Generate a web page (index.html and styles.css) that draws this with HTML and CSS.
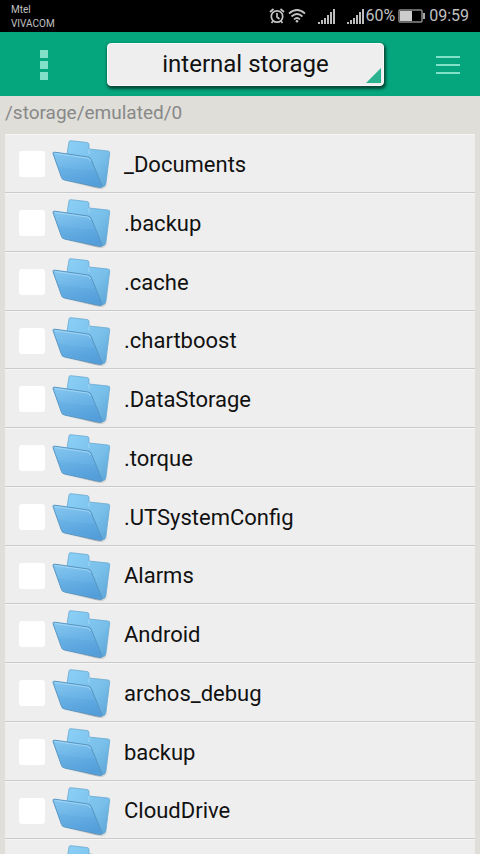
FILE: index.html
```html
<!DOCTYPE html>
<html lang="en">
<head>
<meta charset="utf-8">
<meta name="viewport" content="width=device-width, initial-scale=1">
<title>internal storage</title>
<link rel="stylesheet" href="styles.css">
</head>
<body>
<svg class="defs" aria-hidden="true">
  <defs>
    <linearGradient id="back" x1="0" y1="0" x2="1" y2="1">
      <stop offset="0" stop-color="#8cd0f6"/><stop offset="0.6" stop-color="#78bfea"/><stop offset="1" stop-color="#5ba3d6"/>
    </linearGradient>
    <linearGradient id="front" x1="0.3" y1="0" x2="0.6" y2="1">
      <stop offset="0" stop-color="#82c4ee"/><stop offset="0.5" stop-color="#69b2e6"/><stop offset="1" stop-color="#559fdb"/>
    </linearGradient>
    <linearGradient id="shade" x1="0" y1="0" x2="1" y2="0">
      <stop offset="0" stop-color="#999" stop-opacity="0"/><stop offset="0.7" stop-color="#777" stop-opacity="0.5"/><stop offset="1" stop-color="#999" stop-opacity="0"/>
    </linearGradient>
    <symbol id="folder" viewBox="0 0 60 54">
      <path d="M12 44 48 52Q54 53 57 47L48 43Z" fill="url(#shade)"/>
      <path d="M15 17 17 5Q17 3.500 19 3.700L35 5.500Q37 5.800 37 7.500V12L56 14Q58 14.300 57.700 16L54 46Q53.500 50 50 50L15 32Z" fill="url(#back)" stroke="#6aa9d0" stroke-width="0.800"/>
      <path d="M37 12V17" stroke="#a8daf6" stroke-width="0.800" fill="none"/>
      <path d="M1 16.500Q0.500 15 3 15.200L36 20Q38.500 20.500 39.200 22.500L50 48.500Q50.500 51 47.500 50.400L12.500 43Q10 42.500 9.500 40.500Z" fill="url(#front)" stroke="#5796c3" stroke-width="1"/>
      <path d="M3 16.500 36 21.200Q37.500 21.500 38.500 24" stroke="#a9d9f6" stroke-width="0.800" fill="none"/>
      <path d="M6 29Q25 34 43 33L49 48.500 13 41.500Q11 41 10.500 39Z" fill="#3e8bd0" opacity="0.1"/>
    </symbol>
  </defs>
</svg>

<div class="status">
  <div class="carriers"><span>Mtel</span><span>VIVACOM</span></div>
  <div class="indicators">
    <svg class="alarm" viewBox="0 0 16 16" fill="none" stroke="#c4c4c4" stroke-width="1.700"><circle cx="8" cy="8.500" r="5.700"/><path d="M8 5v4l2.500 2M1 4 4.500 1M15 4 11.500 1M4 13 2.500 15M12 13l1.500 2"/></svg>
    <svg class="wifi" viewBox="0 0 18 16" fill="none" stroke="#c4c4c4" stroke-width="1.700"><path d="M1 5.500Q9-1.500 17 5.500M3.500 8.500Q9 3.500 14.500 8.500M6 11.500Q9 8.500 12 11.500"/><circle cx="9" cy="13.300" r="1.300" fill="#c4c4c4" stroke="none"/></svg>
    <svg class="signal signal-one" viewBox="0 0 17 15" fill="#bdbdbd"><path d="M0 13h2v2H0zM3 11h2v4H3zM6 9h2v6H6zM9 6h2v9H9zM12 3h2v12h-2zM15 0h2v15h-2z"/></svg>
    <svg class="signal signal-two" viewBox="0 0 17 15" fill="#bdbdbd"><path d="M0 13h2v2H0zM3 11h2v4H3zM6 9h2v6H6zM9 6h2v9H9zM12 3h2v12h-2zM15 0h2v15h-2z"/></svg>
    <span class="percent">60%</span>
    <svg class="battery" viewBox="0 0 28 14"><rect x="1" y="1" width="23" height="12" rx="1" fill="none" stroke="#8a8a8a" stroke-width="1.500"/><path d="M2 2h12v10H2z" fill="#ccc"/><path d="M25 4h2v6h-2z" fill="#aaa"/></svg>
    <span class="clock">09:59</span>
  </div>
</div>

<header class="toolbar">
  <button class="tool more" type="button" aria-label="More"><svg viewBox="0 0 8 30" fill="#80e0c8"><path d="M0 0h8v8H0zM0 11h8v8H0zM0 22h8v8H0z"/></svg></button>
  <div class="picker">
    <select aria-label="Storage"><option>internal storage</option></select>
    <svg class="corner" viewBox="0 0 15 15" aria-hidden="true"><path d="M15 0v15H0z" fill="#2bb28e"/></svg>
  </div>
  <button class="tool menu" type="button" aria-label="Menu"><svg viewBox="0 0 24 20" fill="#80e0c8"><path d="M0 1h24v2H0zM0 9h24v2H0zM0 17h24v2H0z"/></svg></button>
</header>

<div class="path">/storage/emulated/0</div>

<ul class="files">
  <li><label><input type="checkbox"><svg class="folder"><use href="#folder"/></svg><span>_Documents</span></label></li>
  <li><label><input type="checkbox"><svg class="folder"><use href="#folder"/></svg><span>.backup</span></label></li>
  <li><label><input type="checkbox"><svg class="folder"><use href="#folder"/></svg><span>.cache</span></label></li>
  <li><label><input type="checkbox"><svg class="folder"><use href="#folder"/></svg><span>.chartboost</span></label></li>
  <li><label><input type="checkbox"><svg class="folder"><use href="#folder"/></svg><span>.DataStorage</span></label></li>
  <li><label><input type="checkbox"><svg class="folder"><use href="#folder"/></svg><span>.torque</span></label></li>
  <li><label><input type="checkbox"><svg class="folder"><use href="#folder"/></svg><span>.UTSystemConfig</span></label></li>
  <li><label><input type="checkbox"><svg class="folder"><use href="#folder"/></svg><span>Alarms</span></label></li>
  <li><label><input type="checkbox"><svg class="folder"><use href="#folder"/></svg><span>Android</span></label></li>
  <li><label><input type="checkbox"><svg class="folder"><use href="#folder"/></svg><span>archos_debug</span></label></li>
  <li><label><input type="checkbox"><svg class="folder"><use href="#folder"/></svg><span>backup</span></label></li>
  <li><label><input type="checkbox"><svg class="folder"><use href="#folder"/></svg><span>CloudDrive</span></label></li>
  <li><label><input type="checkbox" aria-label="Folder"><svg class="folder"><use href="#folder"/></svg></label></li>
</ul>
</body>
</html>
```
FILE: styles.css
```css
* { box-sizing: border-box; }

body {
  margin: 0;
  height: 100vh;
  display: flex;
  flex-direction: column;
  overflow: hidden;
  background: #dfded9;
  color: #111;
  font-family: Roboto, "Liberation Sans", sans-serif;
}

.defs { position: absolute; width: 0; height: 0; }

.status {
  flex: none;
  height: 32px;
  display: flex;
  justify-content: space-between;
  align-items: center;
  padding: 0 11px;
  background: #000;
  color: #c0c0c0;
}

.carriers {
  display: flex;
  flex-direction: column;
  padding-top: 2px;
  font-size: 10px;
  line-height: 14px;
}

.indicators { display: flex; align-items: center; font-size: 16px; line-height: 32px; }
.alarm { width: 16px; height: 16px; }
.wifi { width: 18px; height: 16px; margin-left: 3px; }
.signal { width: 17px; height: 15px; }
.signal-one { margin-left: 12px; }
.signal-two { margin-left: 12px; margin-right: 1px; }
.battery { width: 28px; height: 14px; margin: 0 3px; }

.toolbar {
  flex: none;
  height: 64px;
  display: flex;
  align-items: center;
  justify-content: space-between;
  background: #05a57d;
}

.tool {
  width: 64px;
  height: 64px;
  display: flex;
  align-items: center;
  justify-content: center;
  padding: 2px 0 0;
  border: 0;
  background: none;
}
.more { width: 88px; }
.more svg { width: 8px; height: 30px; }
.menu svg { width: 24px; height: 20px; }

.picker { position: relative; flex: 1; margin: 0 32px 0 19px; }

.picker select {
  display: block;
  width: 100%;
  height: 43px;
  appearance: none;
  border: 1px solid #fafafa;
  border-radius: 4px;
  background: #eee;
  box-shadow: 1px 2px 3px 1px #064836;
  color: #111;
  font-family: inherit;
  font-size: 24px;
  text-align: center;
  text-align-last: center;
}

.corner {
  position: absolute;
  right: 3px;
  bottom: 3px;
  width: 15px;
  height: 15px;
  pointer-events: none;
}

.path {
  flex: none;
  height: 38px;
  padding: 5px 5px 0;
  color: #888;
  font-size: 19px;
  line-height: 24px;
}

.files {
  flex: 1;
  min-height: 0;
  margin: 0 5px;
  padding: 0;
  overflow: hidden auto;
  scrollbar-width: none;
  list-style: none;
  background: #eee;
}

.files li { height: 59px; border-bottom: 1px solid #cacaca; border-top: 1px solid #f6f6f6; }
.files li:nth-child(4n) { height: 58px; }

.files label {
  height: 100%;
  display: flex;
  align-items: center;
  padding: 1px 0 0 14px;
  font-size: 22px;
}

.files input {
  appearance: none;
  flex: none;
  width: 26px;
  height: 26px;
  margin: 0 7px 0 0;
  border-radius: 3px;
  background: #fff;
}
.files input:checked { background: #05a57d; }

.folder { flex: none; width: 60px; height: 54px; margin-right: 12px; }
```
